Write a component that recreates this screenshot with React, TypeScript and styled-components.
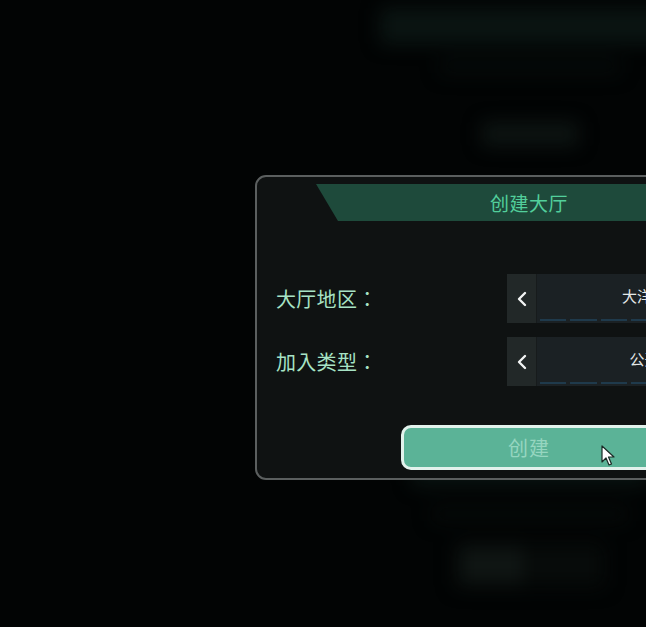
import React from "react";
import styled, { createGlobalStyle } from "styled-components";

const Global = createGlobalStyle`
  html, body {
    margin: 0;
    padding: 0;
    width: 646px;
    height: 627px;
    overflow: hidden;
    background: #020404;
  }
  * { box-sizing: border-box; }
`;

const Screen = styled.div`
  position: relative;
  width: 646px;
  height: 627px;
  overflow: hidden;
  background: #020404;
  font-family: "Noto Sans CJK SC", "Noto Sans", sans-serif;
`;

const Backdrop = styled.div`
  width: 340px;
  margin-left: 360px;
  display: flex;
  flex-direction: column;
  align-items: center;
  filter: blur(9px);
`;

const Blob = styled.div<{ $w: number; $h: number; $mt: number; $c: string }>`
  width: ${(p) => p.$w}px;
  height: ${(p) => p.$h}px;
  margin-top: ${(p) => p.$mt}px;
  background: ${(p) => p.$c};
  border-radius: 4px;
  flex-shrink: 0;
`;

const SplitBlob = styled.div`
  width: 150px;
  height: 46px;
  margin-top: 20px;
  display: flex;
  gap: 8px;
  background: #040706;
  border-radius: 4px;
  padding: 4px;
`;

const SplitPart = styled.div<{ $c: string }>`
  flex: 1;
  background: ${(p) => p.$c};
  border-radius: 3px;
`;

const Dialog = styled.div`
  position: absolute;
  left: 255px;
  top: 175px;
  width: 548px;
  height: 305px;
  border: 2px solid #5b5f5f;
  border-radius: 11px;
  background: #0f1212;
  display: flex;
  flex-direction: column;
  padding: 0 19px 8px;
`;

const Header = styled.div`
  margin: 7px 40px 0;
  height: 39px;
  background: #1e4a3b;
  clip-path: polygon(0 0, 100% 0, calc(100% - 22px) 100%, 22px 100%);
  display: flex;
  align-items: center;
  justify-content: center;
  color: #52cf9b;
  font-size: 19px;
  letter-spacing: 0.5px;
`;

const Rows = styled.div`
  margin-top: 53px;
  display: flex;
  flex-direction: column;
  gap: 14px;
`;

const Row = styled.div`
  display: flex;
  align-items: center;
  justify-content: space-between;
  height: 49px;
`;

const Label = styled.div`
  color: #a7e3c5;
  font-family: "Noto Sans CJK TC", "Noto Sans CJK SC", sans-serif;
  font-size: 20px;
  letter-spacing: 0.3px;
`;

const Selector = styled.div`
  width: 275px;
  height: 49px;
  display: flex;
  background: #1b2124;
`;

const ArrowBtn = styled.div`
  width: 30px;
  height: 100%;
  background: #222828;
  border-right: 1px solid #171b1c;
  display: flex;
  align-items: center;
  justify-content: center;
  flex-shrink: 0;
`;

const SelBody = styled.div`
  flex: 1;
  position: relative;
  display: flex;
  flex-direction: column;
  align-items: center;
  justify-content: center;
  padding: 0 3px;
`;

const SelText = styled.div`
  color: #e4e8e8;
  font-size: 15px;
  margin-top: -6px;
`;

const Segments = styled.div`
  position: absolute;
  left: 3px;
  right: 3px;
  bottom: 2px;
  display: flex;
  gap: 4px;
`;

const Segment = styled.div`
  flex: 1;
  height: 2px;
  background: #1f3a4c;
`;

const ButtonRow = styled.div`
  margin-top: 39px;
  display: flex;
  justify-content: center;
`;

const CreateButton = styled.button`
  width: 256px;
  height: 45px;
  border: 3px solid #e2f2ec;
  border-radius: 10px;
  background: #5bb397;
  color: #96d6c0;
  font-family: "Noto Sans CJK SC", "Noto Sans", sans-serif;
  font-size: 20px;
  letter-spacing: 1px;
  padding: 0;
  cursor: default;
`;

const Cursor = styled.svg`
  position: absolute;
  left: 601px;
  top: 445px;
`;

const Chevron = () => (
  <svg width="12" height="16" viewBox="0 0 12 16">
    <path d="M9 2 L3 8 L9 14" fill="none" stroke="#f2f4f4" strokeWidth="2.4" strokeLinecap="round" strokeLinejoin="round" />
  </svg>
);

const ChevronRight = () => (
  <svg width="12" height="16" viewBox="0 0 12 16">
    <path d="M3 2 L9 8 L3 14" fill="none" stroke="#f2f4f4" strokeWidth="2.4" strokeLinecap="round" strokeLinejoin="round" />
  </svg>
);

const Select = ({ value }: { value: string }) => (
  <Selector>
    <ArrowBtn>
      <Chevron />
    </ArrowBtn>
    <SelBody>
      <SelText>{value}</SelText>
      <Segments>
        {Array.from({ length: 7 }).map((_, i) => (
          <Segment key={i} />
        ))}
      </Segments>
    </SelBody>
    <ArrowBtn>
      <ChevronRight />
    </ArrowBtn>
  </Selector>
);

export default function App() {
  return (
    <>
      <Global />
      <Screen>
        <Backdrop>
          <Blob $w={300} $h={36} $mt={8} $c="#0a1412" />
          <Blob $w={180} $h={16} $mt={14} $c="#050a09" />
          <Blob $w={96} $h={24} $mt={48} $c="#0d1412" />
          <Blob $w={10} $h={10} $mt={300} $c="transparent" />
          <Blob $w={236} $h={30} $mt={0} $c="#091311" />
          <Blob $w={196} $h={16} $mt={20} $c="#050908" />
          <SplitBlob>
            <SplitPart $c="#0f1513" />
            <SplitPart $c="#070b0a" />
          </SplitBlob>
        </Backdrop>
        <Dialog>
          <Header>创建大厅</Header>
          <Rows>
            <Row>
              <Label>大厅地区：</Label>
              <Select value="大洋洲" />
            </Row>
            <Row>
              <Label>加入类型：</Label>
              <Select value="公开" />
            </Row>
          </Rows>
          <ButtonRow>
            <CreateButton>创建</CreateButton>
          </ButtonRow>
        </Dialog>
        <Cursor width="14" height="22" viewBox="0 0 14 22">
          <path d="M1 1 L1 17 L5 13 L8 20 L10.5 19 L7.5 12 L13 12 Z" fill="#ffffff" stroke="#1a2a25" strokeWidth="1.2" strokeLinejoin="round" />
        </Cursor>
      </Screen>
    </>
  );
}
